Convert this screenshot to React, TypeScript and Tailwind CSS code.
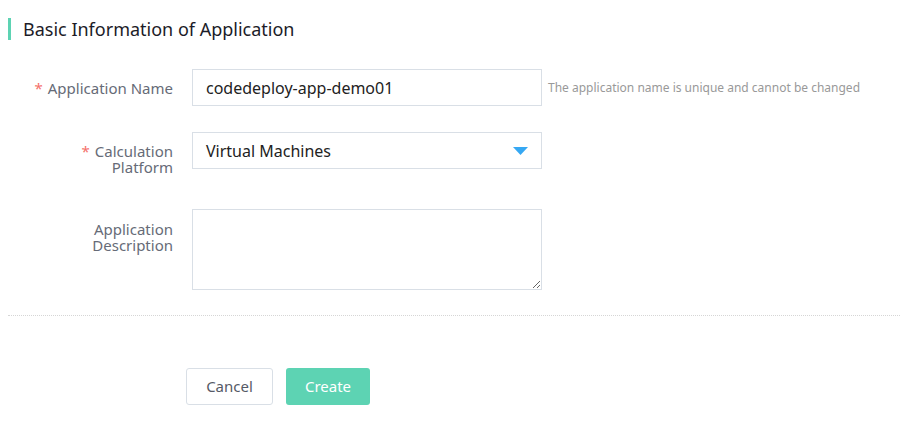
const FONT = "font-['Microsoft_YaHei','Noto_Sans','Open_Sans',sans-serif]";

function Label({ required, lines }: { required?: boolean; lines: string[] }) {
  return (
    <div className="w-[174px] shrink-0 pr-[1px] text-right text-[15px] leading-[16px] text-[#666b77]">
      {lines.map((l, i) => (
        <div key={l}>
          {i === 0 && required && <span className="mr-[5px] text-[#f5706a]">*</span>}
          {l}
        </div>
      ))}
    </div>
  );
}

export default function App() {
  return (
    <div className={`h-[421px] w-[902px] bg-white ${FONT}`}>
      <div className="flex items-center pt-[18px]">
        <div className="ml-[8px] h-[22px] w-[3px] bg-[#5dd3b3]" />
        <h2 className="ml-[12px] text-[18px] leading-[22px] text-[#1c1c28]">
          Basic Information of Application
        </h2>
      </div>

      <div className="mt-[29px] flex items-center">
        <Label required lines={["Application Name"]} />
        <div className="ml-[18px] flex h-[37px] w-[350px] items-center border border-[#d9dfe6] px-[13px] text-[16px] text-[#222]">
          codedeploy-app-demo01
        </div>
        <span className="ml-[6px] text-[12px] text-[#999]">
          The application name is unique and cannot be changed
        </span>
      </div>

      <div className="mt-[26px] flex items-start">
        <div className="pt-[11px]">
          <Label required lines={["Calculation", "Platform"]} />
        </div>
        <div className="ml-[18px] flex h-[37px] w-[350px] items-center justify-between border border-[#d9dfe6] pl-[13px] pr-[13px] text-[16px] text-[#222]">
          <span>Virtual Machines</span>
          <svg width="15" height="8" viewBox="0 0 15 8">
            <path d="M0 0 L15 0 L7.5 8 Z" fill="#36a8f3" />
          </svg>
        </div>
      </div>

      <div className="mt-[34px] flex items-start">
        <div className="pt-[12px]">
          <Label lines={["Application", "Description"]} />
        </div>
        <textarea className="ml-[18px] h-[81px] w-[350px] resize-y border border-[#d9dfe6] outline-none" />
      </div>

      <div className="ml-[8px] mr-[2px] mt-[25px] border-t border-dotted border-[#d6d6d6]" />

      <div className="mt-[52px] flex gap-[13px] pl-[186px]">
        <button className="h-[37px] w-[87px] rounded-[3px] border border-[#d9dfe6] bg-white text-[15px] text-[#555a66]">
          Cancel
        </button>
        <button className="h-[37px] w-[84px] rounded-[3px] bg-[#5dd3b3] text-[15px] text-white">
          Create
        </button>
      </div>
    </div>
  );
}
